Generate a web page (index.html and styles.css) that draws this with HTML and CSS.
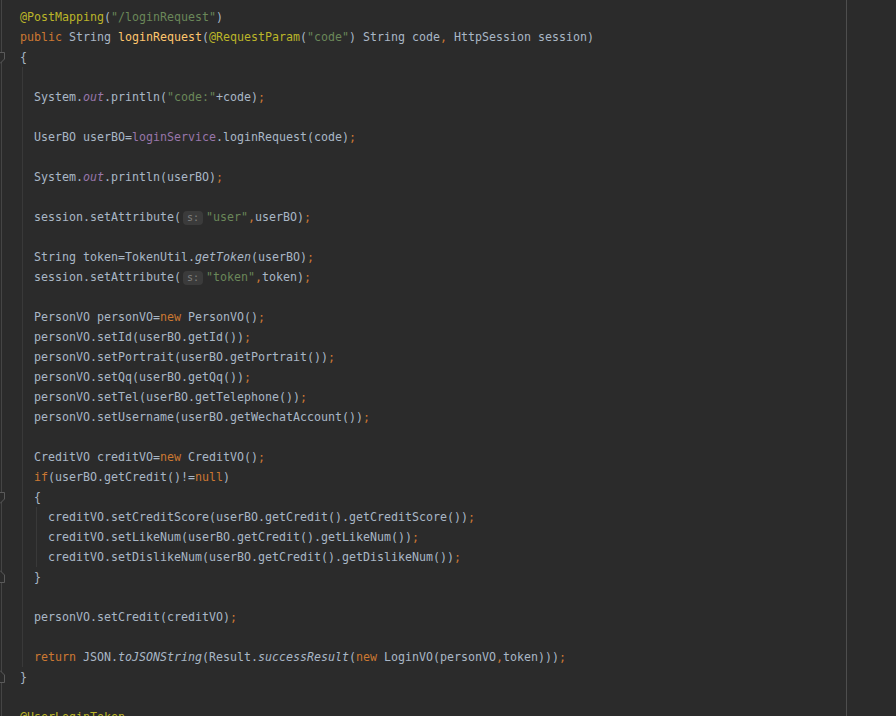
FILE: index.html
```html
<!doctype html>
<html lang="en">
  <head>
    <meta charset="UTF-8" />
    <title>LoginController.java</title>
    <link rel="stylesheet" href="styles.css">
  </head>
  <body>
    <div class="editor">
      <div class="gutter">
        <div class="fold"></div>
        <div class="fold"></div>
        <div class="fold"><svg width="6" height="20" viewBox="0 0 6 20"><path d="M0 5.5H4.5V12L0 16.5" /></svg></div>
        <div class="fold"></div><div class="fold"></div><div class="fold"></div><div class="fold"></div>
        <div class="fold"></div><div class="fold"></div><div class="fold"></div><div class="fold"></div>
        <div class="fold"></div><div class="fold"></div><div class="fold"></div><div class="fold"></div>
        <div class="fold"></div><div class="fold"></div><div class="fold"></div><div class="fold"></div>
        <div class="fold"></div><div class="fold"></div><div class="fold"></div><div class="fold"></div>
        <div class="fold"></div>
        <div class="fold"><svg width="6" height="20" viewBox="0 0 6 20"><path d="M0 5.5H4.5V12L0 16.5" /></svg></div>
        <div class="fold"></div><div class="fold"></div><div class="fold"></div>
        <div class="fold"><svg width="6" height="20" viewBox="0 0 6 20"><path d="M0 3.5L4.5 8V15.5H0" /></svg></div>
        <div class="fold"></div><div class="fold"></div><div class="fold"></div><div class="fold"></div>
        <div class="fold"><svg width="6" height="20" viewBox="0 0 6 20"><path d="M0 3.5L4.5 8V15.5H0" /></svg></div>
        <div class="fold"></div><div class="fold"></div>
      </div>

      <div class="code">
        <div class="line"><span class="a">@PostMapping</span>(<span class="s">"/loginRequest"</span>)</div>
        <div class="line"><span class="k">public</span> String <span class="m">loginRequest</span>(<span class="a">@RequestParam</span>(<span class="s">"code"</span>) String code<span class="k">,</span> HttpSession session)</div>
        <div class="line">{</div>

        <div class="block">
          <div class="line"></div>
          <div class="line">System.<span class="fi">out</span>.println(<span class="s">"code:"</span>+code)<span class="k">;</span></div>
          <div class="line"></div>
          <div class="line">UserBO userBO=<span class="f">loginService</span>.loginRequest(code)<span class="k">;</span></div>
          <div class="line"></div>
          <div class="line">System.<span class="fi">out</span>.println(userBO)<span class="k">;</span></div>
          <div class="line"></div>
          <div class="line">session.setAttribute(<span class="hint">s:</span><span class="s">"user"</span><span class="k">,</span>userBO)<span class="k">;</span></div>
          <div class="line"></div>
          <div class="line">String token=TokenUtil.<span class="i">getToken</span>(userBO)<span class="k">;</span></div>
          <div class="line">session.setAttribute(<span class="hint">s:</span><span class="s">"token"</span><span class="k">,</span>token)<span class="k">;</span></div>
          <div class="line"></div>
          <div class="line">PersonVO personVO=<span class="k">new</span> PersonVO()<span class="k">;</span></div>
          <div class="line">personVO.setId(userBO.getId())<span class="k">;</span></div>
          <div class="line">personVO.setPortrait(userBO.getPortrait())<span class="k">;</span></div>
          <div class="line">personVO.setQq(userBO.getQq())<span class="k">;</span></div>
          <div class="line">personVO.setTel(userBO.getTelephone())<span class="k">;</span></div>
          <div class="line">personVO.setUsername(userBO.getWechatAccount())<span class="k">;</span></div>
          <div class="line"></div>
          <div class="line">CreditVO creditVO=<span class="k">new</span> CreditVO()<span class="k">;</span></div>
          <div class="line"><span class="k">if</span>(userBO.getCredit()!=<span class="k">null</span>)</div>
          <div class="line">{</div>
          <div class="block nested">
            <div class="line">creditVO.setCreditScore(userBO.getCredit().getCreditScore())<span class="k">;</span></div>
            <div class="line">creditVO.setLikeNum(userBO.getCredit().getLikeNum())<span class="k">;</span></div>
            <div class="line">creditVO.setDislikeNum(userBO.getCredit().getDislikeNum())<span class="k">;</span></div>
          </div>
          <div class="line">}</div>
          <div class="line"></div>
          <div class="line">personVO.setCredit(creditVO)<span class="k">;</span></div>
          <div class="line"></div>
          <div class="line"><span class="k">return</span> JSON.<span class="i">toJSONString</span>(Result.<span class="i">successResult</span>(<span class="k">new</span> LoginVO(personVO<span class="k">,</span>token)))<span class="k">;</span></div>
        </div>

        <div class="line">}</div>
        <div class="line"></div>
        <div class="line"><span class="a">@UserLoginToken</span></div>
      </div>
    </div>
  </body>
</html>
```

FILE: styles.css
```css
html, body {
  margin: 0;
  height: 100%;
  background: #2b2b2b;
  overflow: hidden;
}

.editor {
  display: flex;
  height: 716px;
  overflow: hidden;
  padding-top: 7px;
  box-sizing: border-box;
  /* right margin guide */
  background: linear-gradient(to right, transparent 846px, #4e4e4e 846px, #4e4e4e 847px, transparent 847px), #2b2b2b;
  font-family: "DejaVu Sans Mono", "Liberation Mono", monospace;
  font-size: 11.63px;
  line-height: 20px;
  color: #a9b7c6;
}

.gutter {
  width: 6px;
  flex: none;
  display: flex;
  flex-direction: column;
  margin-top: -7px;
  padding-top: 7px;
  background: linear-gradient(to right, transparent 1px, #454545 1px, #454545 2px, transparent 2px);
}

.fold {
  height: 20px;
  flex: none;
}

.fold svg {
  display: block;
}

.fold path {
  fill: #2b2b2b;
  stroke: #5a5a5a;
  stroke-width: 1;
}

.code {
  flex: 1;
}

.line {
  height: 20px;
  padding-left: 14px;
  white-space: pre;
}

.block {
  margin-left: 16px;
  padding-left: 11px;
  border-left: 1px solid #393939;
}

.block .line {
  padding-left: 0;
}

.block.nested {
  margin-left: 2px;
}

/* syntax colours */
.k { color: #cc7832; }
.s { color: #6a8759; }
.a { color: #bbb529; }
.m { color: #ffc66d; }
.f { color: #9876aa; }
.fi { color: #9876aa; font-style: italic; }
.i { font-style: italic; }

.hint {
  display: inline-block;
  vertical-align: top;
  height: 14px;
  margin: 4px 3px 0 2px;
  padding: 0 4px;
  border-radius: 4px;
  background: #3b3b3b;
  color: #7f7f7f;
  font-size: 10px;
  line-height: 14px;
}
```
